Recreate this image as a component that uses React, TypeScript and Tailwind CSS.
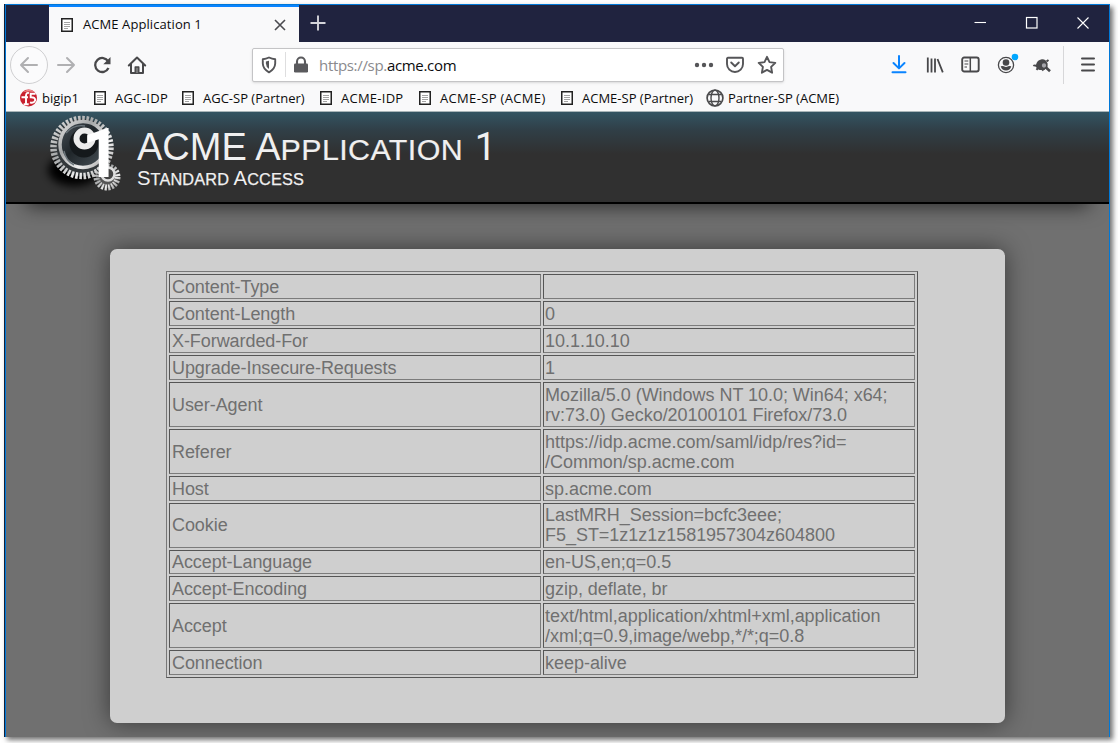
import React from "react";

const UI = "font-['Open_Sans','Noto_Sans',sans-serif]";

const rows: { name: string; value: string[]; height: string }[] = [
  { name: "Content-Type", value: [""], height: "h-[25px]" },
  { name: "Content-Length", value: ["0"], height: "h-[25px]" },
  { name: "X-Forwarded-For", value: ["10.1.10.10"], height: "h-[25px]" },
  { name: "Upgrade-Insecure-Requests", value: ["1"], height: "h-[25px]" },
  { name: "User-Agent", value: ["Mozilla/5.0 (Windows NT 10.0; Win64; x64;", "rv:73.0) Gecko/20100101 Firefox/73.0"], height: "h-[45px]" },
  { name: "Referer", value: ["https://idp.acme.com/saml/idp/res?id=", "/Common/sp.acme.com"], height: "h-[45px]" },
  { name: "Host", value: ["sp.acme.com"], height: "h-[25px]" },
  { name: "Cookie", value: ["LastMRH_Session=bcfc3eee;", "F5_ST=1z1z1z1581957304z604800"], height: "h-[44.5px]" },
  { name: "Accept-Language", value: ["en-US,en;q=0.5"], height: "h-[24.5px]" },
  { name: "Accept-Encoding", value: ["gzip, deflate, br"], height: "h-[25px]" },
  { name: "Accept", value: ["text/html,application/xhtml+xml,application", "/xml;q=0.9,image/webp,*/*;q=0.8"], height: "h-[45px]" },
  { name: "Connection", value: ["keep-alive"], height: "h-[25px]" },
];

function PageIcon() {
  return (
    <svg width="12" height="14" viewBox="0 0 12 14" className="shrink-0" fill="none">
      <rect x="0.75" y="0.75" width="10.5" height="12.5" fill="#fff" stroke="#222" strokeWidth="1.5" />
      <path d="M3 4.500h6M3 6.500h6M3 8.500h6M3 10.500h4" stroke="#999" strokeWidth="0.9" />
    </svg>
  );
}

function Bookmark({ label, width, spacing }: { label: string; width: string; spacing: string }) {
  return (
    <div className={`flex shrink-0 items-center gap-[9px] ${width}`}>
      <PageIcon />
      <span className={`whitespace-nowrap ${spacing}`}>{label}</span>
    </div>
  );
}

function F5Icon() {
  return (
    <svg width="20" height="18" viewBox="0 0 20 18" className="shrink-0">
      <circle cx="9.500" cy="9" r="8.5" fill="#c8202e" />
      <path d="M4 3.200Q10-1.500 16 3.200Q10 1.600 4 3.200Z" fill="#ef8b8b" />
      <path d="M7 15V6.500Q7.300 3 10 4.200M2.500 8.300h6.500M4.700 15.200h5" fill="none" stroke="#fff" strokeWidth="1.900" />
      <path d="M16.500 4.800h-4.800v3.400Q16.700 8 16.100 11.600Q14.500 14.700 11 13.300" fill="none" stroke="#fff" strokeWidth="1.900" />
    </svg>
  );
}

function TitleBar() {
  return (
    <div className="flex h-[37px] shrink-0 bg-[#20233f]">
      <div className="w-[43px] shrink-0" />
      <div className="flex w-[250px] shrink-0 items-center border-t-2 border-[#0a84ff] bg-[#f9f9fa] pl-[12px] pr-3 text-[13px] text-[#0c0c0d]">
        <PageIcon />
        <span className="ml-[10px] whitespace-nowrap pt-px tracking-[0.08px]">ACME Application 1</span>
        <svg width="14" height="14" viewBox="0 0 14 14" className="ml-auto" stroke="#4a4a4f" strokeWidth="1.6">
          <path d="M2 2l10 10M12 2L2 12" />
        </svg>
      </div>
      <svg width="18" height="18" viewBox="0 0 18 18" className="ml-[10px] mt-[9px]" stroke="#d4d4da" strokeWidth="1.9">
        <path d="M9 1.500v15M1.500 9h15" />
      </svg>
      <div className="ml-auto flex items-start pr-[19px] pt-[11px]">
        <svg width="14" height="14" viewBox="0 0 14 14" className="mr-[38px]" stroke="#fff" strokeWidth="1.1">
          <path d="M2.500 6.500h11.500" />
        </svg>
        <svg width="14" height="14" viewBox="0 0 14 14" className="mr-[38px]" fill="none" stroke="#fff" strokeWidth="1.2">
          <rect x="2.500" y="1.500" width="10.500" height="10.500" />
        </svg>
        <svg width="14" height="14" viewBox="0 0 14 14" stroke="#fff" strokeWidth="1.1">
          <path d="M1.500 1.500l11 11M12.500 1.500l-11 11" />
        </svg>
      </div>
    </div>
  );
}

function NavBar() {
  return (
    <div className="flex h-[45px] shrink-0 items-center bg-[#f9f9fa]">
      <div className="ml-[4px] flex h-[38px] w-[38px] shrink-0 items-center justify-center rounded-full border border-[#cfcfd1] bg-[#fbfbfc]">
        <svg width="20" height="18" viewBox="0 0 20 18" fill="none" stroke="#b0b0b2" strokeWidth="2" strokeLinecap="round" strokeLinejoin="round">
          <path d="M18 9H2M9 2L2 9l7 7" />
        </svg>
      </div>
      <svg width="20" height="18" viewBox="0 0 20 18" className="ml-[8px]" fill="none" stroke="#b0b0b2" strokeWidth="2" strokeLinecap="round" strokeLinejoin="round">
        <path d="M2 9h16M11 2l7 7-7 7" />
      </svg>
      <svg width="20" height="18" viewBox="0 0 20 18" className="ml-[16px]" fill="none">
        <path d="M16.200 5.400A7 7 0 1 0 16.500 12" stroke="#48484a" strokeWidth="2.300" />
        <path d="M18.500 1v7.200h-7.200z" fill="#48484a" />
      </svg>
      <svg width="20" height="20" viewBox="0 0 20 20" className="ml-[15px]" fill="none" stroke="#48484a" strokeWidth="2" strokeLinejoin="round">
        <path d="M1.800 10.500L10 2.500l8.200 8M4 9v9h12V9" strokeLinecap="round" />
        <path d="M8.200 18v-6h3.600v6" fill="#777" strokeWidth="1.400" />
      </svg>
      <div className="ml-[105px] flex h-[34px] w-[532px] shrink-0 items-center rounded-[2px] border border-[#c4c4c6] bg-white shadow-sm">
        <svg width="16" height="18" viewBox="0 0 16 18" className="ml-[8px]" fill="none">
          <path d="M8 1.500Q11 3 14.200 3.200V7.500Q14 13 8 16.300Q2 13 1.800 7.500V3.200Q5 3 8 1.500Z" stroke="#555558" strokeWidth="1.900" strokeLinejoin="round" />
          <path d="M8 4.800V13Q5 10.800 4.900 7.500V5.500Z" fill="#555558" />
        </svg>
        <div className="ml-[8px] h-[25px] w-px bg-[#dededf]" />
        <svg width="16" height="18" viewBox="0 0 16 18" className="ml-[7px]" fill="none">
          <rect x="1" y="7.500" width="14" height="9" rx="1.300" fill="#5a5a5d" />
          <path d="M4 8V5.500a4 4 0 0 1 8 0V8" stroke="#5a5a5d" strokeWidth="2.100" />
        </svg>
        <span className="ml-[10px] whitespace-nowrap pt-[2px] text-[15px] tracking-[-0.32px] text-[#0c0c0d]">
          <span className="text-[#8a8a8e]">https://sp.</span>acme.com
        </span>
        <svg width="20" height="6" viewBox="0 0 20 6" className="ml-auto" fill="#555558">
          <circle cx="3" cy="3" r="2.200" /><circle cx="10" cy="3" r="2.200" /><circle cx="17" cy="3" r="2.200" />
        </svg>
        <svg width="20" height="18" viewBox="0 0 20 18" className="ml-[11px]" fill="none" stroke="#555558" strokeWidth="1.900" strokeLinecap="round" strokeLinejoin="round">
          <path d="M3 1.800h14q1 0 1 1V8a8 8 0 0 1-16 0V2.800q0-1 1-1Z" /><path d="M6.200 6.500l3.800 3.700 3.800-3.700" />
        </svg>
        <svg width="20" height="20" viewBox="0 0 20 20" className="ml-[12px] mr-[6px]" fill="none" stroke="#555558" strokeWidth="1.900" strokeLinejoin="round">
          <path d="M10 1.800l2.500 5.300 5.800.8-4.200 4 1 5.800L10 14.900l-5.100 2.800 1-5.800-4.200-4 5.800-.8z" />
        </svg>
      </div>
      <svg width="16" height="19" viewBox="0 0 16 19" className="ml-[107px]" fill="none" stroke="#0a84ff" strokeWidth="2" strokeLinecap="round" strokeLinejoin="round">
        <path d="M8 1v12M2.500 8L8 13.400 13.500 8M1.500 17.300h13" />
      </svg>
      <svg width="18" height="18" viewBox="0 0 18 18" className="ml-[19px]" fill="none" stroke="#48484a" strokeWidth="1.800">
        <path d="M1.800 1.500v15M5.500 2.500v14M9 2.500v14M11.500 3l5.300 13.300" />
      </svg>
      <svg width="19" height="17" viewBox="0 0 19 17" className="ml-[17px]" fill="none" stroke="#48484a">
        <rect x="1.200" y="1.500" width="16.500" height="14" rx="2" strokeWidth="1.900" />
        <path d="M9.300 1.500v14" strokeWidth="1.500" /><path d="M3.500 5h3.800M3.500 8h3.800M3.500 11h2.500" strokeWidth="1.100" />
      </svg>
      <svg width="23" height="22" viewBox="0 0 23 22" className="mb-[4px] ml-[17px]" fill="none">
        <circle cx="9" cy="13" r="7.600" stroke="#48484a" strokeWidth="1.300" />
        <circle cx="9" cy="10.500" r="3.300" fill="#48484a" />
        <path d="M3.700 14.200q2.200-.5 3.200 0 2.100 1.500 4.200 0 1.400-.5 3.200 0Q13 18.600 9 18.600t-5.300-4.400Z" fill="#48484a" />
        <circle cx="18" cy="5" r="3.300" fill="#00a7ff" />
      </svg>
      <svg width="20" height="16" viewBox="0 0 20 16" className="ml-[12px] mt-[1px]" fill="none">
        <path d="M.8 9Q1.500 7 4 7.700 5 3 9.800 2.200q4-.4 5.700 4.300L14.500 10l-2 3H7.500Q4.500 12 4 9.800Z" fill="#48484a" />
        <path d="M6 11l-1.500 1.800M10 12l1.500 1.500" stroke="#48484a" strokeWidth="2" />
        <circle cx="12" cy="8.500" r="2.900" fill="#a5a5aa" stroke="#48484a" strokeWidth="1.500" />
        <path d="M14 10.500l4 3.700" stroke="#48484a" strokeWidth="2.600" /><path d="M14.500 4.500l2-1.500" stroke="#48484a" strokeWidth="2" />
      </svg>
      <div className="ml-[11px] h-[38px] w-px bg-[#d7d7d9]" />
      <svg width="14" height="15" viewBox="0 0 14 15" className="ml-[17px]" stroke="#48484a" strokeWidth="2" strokeLinecap="round">
        <path d="M1 1.500h12M1 7.500h12M1 13.500h12" />
      </svg>
    </div>
  );
}

function BookmarksBar() {
  return (
    <div className="flex h-[25px] shrink-0 items-center border-b border-[#a9b5b9] bg-[#f9f9fa] pb-[2px] pl-[13px] text-[13px] text-[#0c0c0d] [&_span]:pt-px">
      <div className="flex w-[75px] shrink-0 items-center gap-[3px]">
        <F5Icon />
        <span>bigip1</span>
      </div>
      <Bookmark label="AGC-IDP" width="w-[88px]" spacing="tracking-[0.3px]" />
      <Bookmark label="AGC-SP (Partner)" width="w-[138px]" spacing="tracking-[0px]" />
      <Bookmark label="ACME-IDP" width="w-[99px]" spacing="tracking-[0.25px]" />
      <Bookmark label="ACME-SP (ACME)" width="w-[142px]" spacing="tracking-[0.34px]" />
      <Bookmark label="ACME-SP (Partner)" width="w-[145px]" spacing="tracking-[0px]" />
      <div className="flex items-center gap-[4px]">
        <svg width="18" height="18" viewBox="0 0 18 18" fill="none" stroke="#4a4a4c" strokeWidth="1.400" className="shrink-0">
          <circle cx="9" cy="9" r="7.900" strokeWidth="1.700" /><ellipse cx="9" cy="9" rx="4" ry="7.900" /><path d="M2.500 5.500h13M2.500 12.500h13" strokeWidth="1.300" />
        </svg>
        <span className="whitespace-nowrap">Partner-SP (ACME)</span>
      </div>
    </div>
  );
}

function GearLogo() {
  return (
    <svg width="84" height="88" viewBox="38 112 84 88" className="shrink-0">
      <defs>
        <linearGradient id="metal" x1="0" y1="0" x2="1" y2="1">
          <stop offset="0" stopColor="#e2e2e2" /><stop offset=".35" stopColor="#a4a6a7" /><stop offset=".7" stopColor="#f0f0f0" /><stop offset="1" stopColor="#979797" />
        </linearGradient>
        <linearGradient id="hub" x1="0" y1="0" x2="1" y2="1">
          <stop offset="0" stopColor="#4a545c" /><stop offset=".45" stopColor="#20262a" /><stop offset="1" stopColor="#4b545b" />
        </linearGradient>
        <filter id="soft" x="-40%" y="-40%" width="180%" height="180%"><feGaussianBlur stdDeviation="4" /></filter>
      </defs>
      <ellipse cx="74" cy="170" rx="26" ry="16" fill="#050505" filter="url(#soft)" />
      <circle cx="82" cy="147.500" r="29" fill="#33383b" />
      <circle cx="82" cy="147.500" r="28.500" fill="none" stroke="url(#metal)" strokeWidth="6.500" strokeDasharray="2.500 1.570" />
      <circle cx="83" cy="144.500" r="23" fill="url(#hub)" stroke="url(#metal)" strokeWidth="3.500" />
      <path d="M66 133q8-9 19-7M64 151q2 10 10 14" fill="none" stroke="#6b757b" strokeWidth="1.400" />
      <circle cx="84" cy="143" r="14.500" fill="#15191c" />
      <circle cx="84.500" cy="138.500" r="8" fill="none" stroke="#ececec" strokeWidth="6" />
      <circle cx="107" cy="177" r="11" fill="#555" />
      <circle cx="107" cy="177" r="10.500" fill="none" stroke="url(#metal)" strokeWidth="6" strokeDasharray="2 1.300" />
      <circle cx="108" cy="174" r="6.500" fill="#444" stroke="#ddd" strokeWidth="2.500" />
      <text x="81.500" y="177" fill="#fff" fontFamily="Roboto, sans-serif" fontWeight="700" fontSize="69">1</text>
    </svg>
  );
}

function PageHeader() {
  return (
    <header className="relative flex h-[92px] shrink-0 border-b-2 border-black bg-[linear-gradient(to_bottom,#335462_0px,#303f47_18px,#303030_42px,#303030_100%)] pl-[32px] text-[#f0f0f0] shadow-[0_22px_20px_-20px_rgba(0,0,0,0.65)]">
      <GearLogo />
      <div className="ml-[15px] whitespace-nowrap pt-[15px]">
        <h1 className="h-[40px] text-[38px] leading-[41px]">
          ACME A<span className="text-[30.400px] uppercase tracking-[0.4px] [-webkit-text-stroke:0.2px_#f0f0f0]">pplication</span>{" "}
          <span className="ml-[1px] font-['Roboto'] font-normal">1</span>
        </h1>
        <h2 className="h-[24px] text-[20.300px] leading-[22px]">
          S<span className="text-[16.300px] uppercase tracking-[0.15px] [-webkit-text-stroke:0.25px_#f0f0f0]">tandard</span> A<span className="text-[16.300px] uppercase tracking-[0.15px] [-webkit-text-stroke:0.25px_#f0f0f0]">ccess</span>
        </h2>
      </div>
    </header>
  );
}

const CELL = "border border-t-[#555] border-l-[#555] border-b-[#7c7c7c] border-r-[#7c7c7c] leading-[20px]";

function HeaderTable() {
  return (
    <div className="flex w-[752px] flex-col gap-[2px] border border-b-[#555] border-l-[#777] border-r-[#555] border-t-[#777] p-[2px] text-[18px] tracking-[-0.03px] text-[#707070]">
      {rows.map((r) => (
        <div key={r.name} className={`grid grid-cols-[372px_1fr] gap-[2px] whitespace-nowrap ${r.height}`}>
          <div className={`flex items-center pl-[2px] tracking-[-0.07px] ${CELL}`}>{r.name}</div>
          <div className={`flex flex-col justify-center pl-px ${CELL}`}>
            {r.value.map((v) => (
              <span key={v} className="block">{v}</span>
            ))}
          </div>
        </div>
      ))}
    </div>
  );
}

export default function App() {
  return (
    <div className="h-[743px] w-[1118px] overflow-hidden bg-white pl-[4px] pt-[4px]">
      <div className="flex h-[733px] w-[1106px] flex-col border-l border-[#10203a] shadow-[3px_3px_5px_rgba(0,0,0,0.55)]">
        <div className={`flex min-h-0 flex-1 flex-col border-l border-r border-t border-[#0078d7] ${UI}`}>
          <TitleBar />
          <NavBar />
          <BookmarksBar />
          <div className="flex min-h-0 flex-1 flex-col overflow-hidden bg-[#707070] font-['Liberation_Sans',Arial,sans-serif]">
            <PageHeader />
            <main className="ml-[104px] mt-[45px] h-[474px] w-[895px] shrink-0 rounded-[7px] bg-[#cfcfcf] pl-[56px] pt-[22px] shadow-[0_0_24px_rgba(0,0,0,0.5)]">
              <HeaderTable />
            </main>
          </div>
        </div>
      </div>
    </div>
  );
}
